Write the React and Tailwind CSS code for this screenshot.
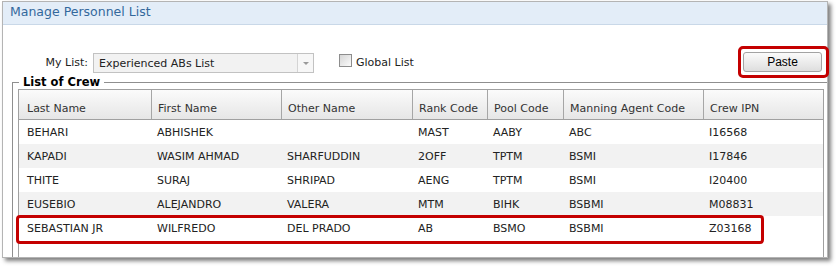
import React from 'react';

const columns = [
  { label: 'Last Name', w: 'w-[133px]', first: true },
  { label: 'First Name', w: 'w-[130px]' },
  { label: 'Other Name', w: 'w-[131px]' },
  { label: 'Rank Code', w: 'w-[75px]' },
  { label: 'Pool Code', w: 'w-[76px]' },
  { label: 'Manning Agent Code', w: 'w-[140px]' },
  { label: 'Crew IPN', w: 'w-[119px]', last: true },
];

const crew = [
  ['BEHARI', 'ABHISHEK', '', 'MAST', 'AABY', 'ABC', 'I16568'],
  ['KAPADI', 'WASIM AHMAD', 'SHARFUDDIN', '2OFF', 'TPTM', 'BSMI', 'I17846'],
  ['THITE', 'SURAJ', 'SHRIPAD', 'AENG', 'TPTM', 'BSMI', 'I20400'],
  ['EUSEBIO', 'ALEJANDRO', 'VALERA', 'MTM', 'BIHK', 'BSBMI', 'M08831'],
  ['SEBASTIAN JR', 'WILFREDO', 'DEL PRADO', 'AB', 'BSMO', 'BSBMI', 'Z03168'],
];

function App() {
  return (
    <div className="relative w-[836px] h-[266px] bg-white pl-[2px] pt-[1px] font-['DejaVu_Sans',sans-serif] text-[#222]">
      <div className="w-[826px] h-[257px] border border-[#b4b4b4] bg-white shadow-[3px_3px_4px_rgba(0,0,0,0.5)] flex flex-col overflow-hidden">
        {/* header */}
        <div className="h-[23px] shrink-0 bg-[#e3edf8] border-b border-[#c9d8e8] pl-[7px] flex items-center">
          <span className="text-[12.5px] leading-[16px] text-[#33689c] -mt-[2px]">Manage Personnel List</span>
        </div>

        {/* controls */}
        <div className="mt-[27px] h-[21px] shrink-0 flex items-start text-[11px]">
          <span className="w-[85px] text-right mt-[4px] leading-[13px]">My List:</span>
          <div className="ml-[5px] mt-[1px] w-[221px] h-[20px] border border-[#c2c2c2] bg-[#f2f2f2] flex items-center">
            <span className="flex-1 pl-[5px] leading-[13px]">Experienced ABs List</span>
            <div className="w-[16px] h-full border-l border-[#d4d4d4] bg-[#f7f7f7] flex items-center justify-center">
              <div className="w-0 h-0 border-l-[3px] border-r-[3px] border-t-[3px] border-l-transparent border-r-transparent border-t-[#9a9a9a]"></div>
            </div>
          </div>
          <div className="ml-[25px] mt-[2px] w-[13px] h-[13px] border border-[#8d8d8d] bg-gradient-to-br from-[#d6d6d6] to-[#fbfbfb]"></div>
          <span className="ml-[4px] mt-[4px] leading-[13px]">Global List</span>
          <button className="ml-auto mr-[5px] w-[79px] h-[20px] rounded-[3px] border border-[#a3a3a3] bg-gradient-to-b from-[#fbfbfb] to-[#dedede] text-[12px] font-['Liberation_Sans',sans-serif] text-black leading-[14px]">
            Paste
          </button>
        </div>

        {/* list of crew */}
        <fieldset className="ml-[9px] mt-[3px] border-t border-l border-[#8f8f8f] pl-[5px]">
          <legend className="ml-[1px] px-[4px] text-[11.5px] font-bold leading-[13px] text-black">List of Crew</legend>
          <div className="w-[806px] h-[200px] border-x border-t border-[#a0a0a0] text-[11px]">
            <div className="h-[30px] flex border-b border-[#a0a0a0] bg-gradient-to-b from-[#fbfbfb] to-[#e6e6e6] text-[#333]">
              {columns.map((c) => (
                <div
                  key={c.label}
                  className={`${c.w} shrink-0 h-full pt-[12px] leading-[13px] whitespace-nowrap ${c.first ? 'pl-[8px]' : 'pl-[6px]'} ${c.last ? '' : 'border-r border-[#a6a6a6]'}`}
                >
                  {c.label}
                </div>
              ))}
            </div>
            {crew.map((row, i) => (
              <div key={i} className={`h-[24px] flex items-center ${i % 2 === 1 ? 'bg-[#f2f2f2]' : 'bg-white'}`}>
                {row.map((cell, j) => (
                  <div
                    key={j}
                    className={`${columns[j].w} shrink-0 leading-[13px] pt-[1px] whitespace-nowrap ${j === 0 ? 'pl-[8px]' : 'pl-[5px]'}`}
                  >
                    {cell}
                  </div>
                ))}
              </div>
            ))}
          </div>
        </fieldset>
      </div>

      {/* annotation highlights */}
      <div className="absolute left-[738px] top-[46px] w-[91px] h-[32px] border-[3px] border-[#c40000] rounded-[5px]"></div>
      <div className="absolute left-[16px] top-[215px] w-[748px] h-[29px] border-[3px] border-[#c40000] rounded-[4px]"></div>
    </div>
  );
}

export default App;
